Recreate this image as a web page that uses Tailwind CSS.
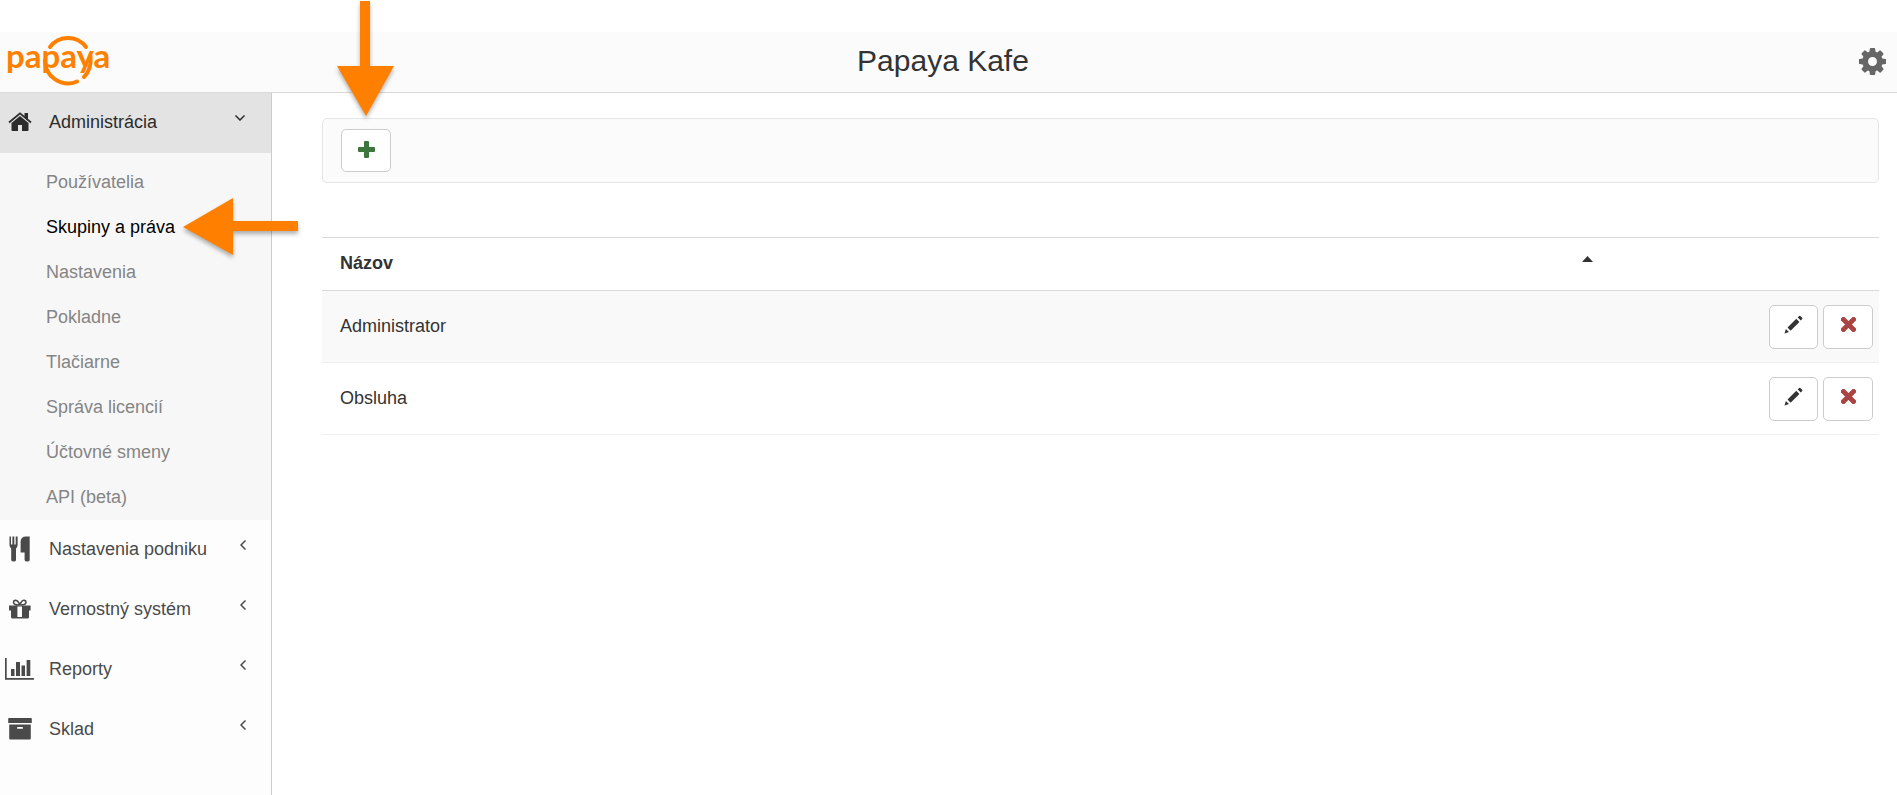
<!DOCTYPE html>
<html lang="sk">
  <head>
    <meta charset="UTF-8" />
    <meta name="viewport" content="width=device-width, initial-scale=1.0" />
    <title>Papaya Kafe</title>
    <script src="https://cdn.jsdelivr.net/npm/@tailwindcss/browser@4"></script>
  </head>
  <body class="relative min-h-screen flex flex-col bg-white pt-8 font-['Liberation_Sans',Arial,sans-serif] text-[18px] leading-6 text-[#333]">
    <!-- Header -->
    <header class="grid grid-cols-3 items-center h-[61px] pr-[11px] pb-[2px] bg-[#fbfbfb] border-b border-[#d9d9d9]">
      <a href="#" aria-label="papaya">
        <svg class="block" width="120" height="54" viewBox="-8 0 120 54" fill="none" stroke="#ff8000" stroke-width="4" stroke-linecap="round">
          <path d="M42 13A22.500 22.500 0 0 1 78 13" />
          <path d="M37 26A23 23 0 0 0 69 47.500" />
          <path d="M82.500 22C83.500 31 81 38 76 43" />
          <text x="-2" y="34" font-family="Lato, sans-serif" font-size="33" font-weight="700" fill="#ff8000" stroke="none">papaya</text>
        </svg>
      </a>
      <h1 class="text-center text-[30px] leading-9">Papaya Kafe</h1>
      <button type="button" class="justify-self-end text-[#666]" aria-label="Nastavenia">
        <svg class="block" width="27" height="27" viewBox="0 0 1536 1536" fill="currentColor">
          <path d="M1024 768q0-106-75-181t-181-75-181 75-75 181 75 181 181 75 181-75 75-181zm512-109v222q0 12-8 23t-20 13l-185 28q-19 54-39 91 35 50 107 138 10 12 10 25t-9 23q-27 37-99 108t-94 71q-12 0-26-9l-138-108q-44 23-91 38-16 136-29 186-7 28-36 28H657q-14 0-24.500-8.500T621 1506l-28-184q-49-16-90-37l-141 107q-10 9-25 9-14 0-25-11-126-114-165-168-7-10-7-23 0-12 8-23 15-21 51-66.500t54-70.500q-27-50-41-99L29 913q-13-2-21-12.500T0 877V655q0-12 8-23t19-13l186-28q14-46 39-92-40-57-107-138-10-12-10-24 0-10 9-23 26-36 98.500-107.500T337 135q13 0 26 10l138 107q44-23 91-38 16-136 29-186 7-28 36-28h222q14 0 24.500 8.500T915 30l28 184q49 16 90 37l142-107q9-9 24-9 13 0 25 10 129 119 165 170 7 8 7 22 0 12-8 23-15 21-51 66.500t-54 70.500q26 50 41 98l183 28q13 2 21 12.500t8 23.500z" />
        </svg>
      </button>
    </header>

    <div class="flex flex-1">
      <!-- Sidebar -->
      <nav class="w-[272px] shrink-0 bg-[#fdfdfd] border-r border-[#ccc] text-[#4a4a4a]">
        <a href="#" class="flex items-center h-15 pr-[26px] pb-[2px] bg-[#e3e3e3] text-[#2b2b2b]">
          <span class="w-[49px] pl-2">
            <svg width="24" height="20" viewBox="0 0 24 20" fill="currentColor">
              <path d="M3.500 11L12 4l8.500 7v7q0 1-1 1H14v-6h-4v6H4.500q-1 0-1-1z" />
              <path d="M1 10.500L12 1.400l11 9.100" fill="none" stroke="currentColor" stroke-width="1.800" />
              <path d="M16.500 1H20v7l-3.500-3z" />
            </svg>
          </span>
          <span class="flex-1">Administrácia</span>
          <svg class="mb-2" width="10" height="6" viewBox="0 0 10 6" fill="none" stroke="currentColor" stroke-width="1.500"><path d="M.5.5L5 5 9.500.5" /></svg>
        </a>
        <ul class="pt-[7px] bg-[#f7f7f7] text-[#858585]">
          <li><a href="#" class="flex items-center h-[45px] pl-[46px] pb-[2px]">Používatelia</a></li>
          <li><a href="#" class="flex items-center h-[45px] pl-[46px] pb-[2px] text-black">Skupiny a práva</a></li>
          <li><a href="#" class="flex items-center h-[45px] pl-[46px] pb-[2px]">Nastavenia</a></li>
          <li><a href="#" class="flex items-center h-[45px] pl-[46px] pb-[2px]">Pokladne</a></li>
          <li><a href="#" class="flex items-center h-[45px] pl-[46px] pb-[2px]">Tlačiarne</a></li>
          <li><a href="#" class="flex items-center h-[45px] pl-[46px] pb-[2px]">Správa licencií</a></li>
          <li><a href="#" class="flex items-center h-[45px] pl-[46px] pb-[2px]">Účtovné smeny</a></li>
          <li><a href="#" class="flex items-center h-[45px] pl-[46px] pb-[2px]">API (beta)</a></li>
        </ul>
        <a href="#" class="flex items-center h-15 pr-[25px] pb-[2px]">
          <span class="w-[49px] pl-[9px]">
            <svg width="22" height="26" viewBox="0 0 22 26" fill="currentColor">
              <path d="M.5.5h1.500v8h1.400v-8h1.900v8h1.400v-8H8.600v8.500q0 2-1.600 3.500V24q0 1.500-2.300 1.500T2.200 24V12.500Q.5 11 .5 9z" />
              <path d="M20.700.5V24q0 1.500-2.500 1.500T15.600 24v-7.500h-4V6q0-5.500 5.500-5.500z" />
            </svg>
          </span>
          <span class="flex-1">Nastavenia podniku</span>
          <svg class="mb-2" width="6" height="10" viewBox="0 0 6 10" fill="none" stroke="currentColor" stroke-width="1.500"><path d="M5.500.5L1 5l4.500 4.500" /></svg>
        </a>
        <a href="#" class="flex items-center h-15 pr-[25px] pb-[2px]">
          <span class="w-[49px] pl-[9px]">
            <svg width="22" height="20" viewBox="0 0 22 20" fill="currentColor">
              <path d="M10 6C7 6 4.500 5.500 4.500 3.300S7.500.6 9 2.600L10.800 5.500 12.600 2.600C14 .6 17 1 17 3.300S15 6 11.500 6" fill="none" stroke="currentColor" stroke-width="1.600" />
              <path d="M0 6.500h21.600v5h-1.600V18q0 1.500-1.500 1.500h-15Q2 19.500 2 18v-6.500H0z" />
              <path d="M8.400 7.500h4.600v10.500H8.400z" fill="#fdfdfd" />
            </svg>
          </span>
          <span class="flex-1">Vernostný systém</span>
          <svg class="mb-2" width="6" height="10" viewBox="0 0 6 10" fill="none" stroke="currentColor" stroke-width="1.500"><path d="M5.500.5L1 5l4.500 4.500" /></svg>
        </a>
        <a href="#" class="flex items-center h-15 pr-[25px] pb-[2px]">
          <span class="w-[49px] pl-[5px]">
            <svg width="29" height="22" viewBox="0 0 29 22" fill="currentColor">
              <path d="M0 0h1.700v20H29v1.800H0zM6 11h3.500v7H6zM11 4h4v14h-4zM16.500 7.500H20V18h-3.500zM21.600 2h3.700v16h-3.700z" />
            </svg>
          </span>
          <span class="flex-1">Reporty</span>
          <svg class="mb-2" width="6" height="10" viewBox="0 0 6 10" fill="none" stroke="currentColor" stroke-width="1.500"><path d="M5.500.5L1 5l4.500 4.500" /></svg>
        </a>
        <a href="#" class="flex items-center h-15 pr-[25px] pb-[2px]">
          <span class="w-[49px] pl-2">
            <svg width="24" height="22" viewBox="0 0 24 22" fill="currentColor">
              <path d="M1 0h22q.8 0 .8.800V5H.2V.8Q.2 0 1 0z" />
              <path fill-rule="evenodd" d="M1.200 6.400h21.600v14.200q0 1-1 1H2.200q-1 0-1-1zM9.800 9q-.8 0-.8.900t.8.900h4.400q.8 0 .8-.9t-.8-.9z" />
            </svg>
          </span>
          <span class="flex-1">Sklad</span>
          <svg class="mb-2" width="6" height="10" viewBox="0 0 6 10" fill="none" stroke="currentColor" stroke-width="1.500"><path d="M5.500.5L1 5l4.500 4.500" /></svg>
        </a>
      </nav>

      <!-- Content -->
      <main class="flex-1 pt-[25px] pl-[50px] pr-[18px]">
        <div class="px-[18px] py-[10px] bg-[#fbfbfb] border border-[#e5e5e5] rounded-[5px]">
          <button type="button" class="flex justify-center items-center w-[50px] h-[43px] pb-[2px] bg-white border border-[#ccc] rounded-[5px] text-[#3c763d]" aria-label="Pridať">
            <svg width="17" height="17" viewBox="0 0 17 17" fill="currentColor"><path d="M7 0h3q1 0 1 1v5h5q1 0 1 1v3q0 1-1 1h-5v5q0 1-1 1H7q-1 0-1-1v-5H1q-1 0-1-1V7q0-1 1-1h5V1q0-1 1-1z" /></svg>
          </button>
        </div>

        <table class="w-full mt-[54px] border-collapse">
          <thead>
            <tr class="h-[53px] border-y border-[#d9d9d9]">
              <th class="w-[82%] pl-[18px] pr-[6px] pb-[2px] text-left font-bold">
                <div class="flex items-center justify-between">
                  Názov
                  <svg class="mb-2" width="11" height="6" viewBox="0 0 11 6" fill="currentColor"><path d="M0 6L5.500 0 11 6z" /></svg>
                </div>
              </th>
              <th></th>
            </tr>
          </thead>
          <tbody>
            <tr class="h-[72px] bg-[#f9f9f9] border-b border-[#eee]">
              <td class="pl-[18px] pb-[2px]">Administrator</td>
              <td class="pr-[6px]">
                <div class="flex justify-end gap-[5px]">
                  <button type="button" class="flex justify-center items-center w-[49px] h-11 pb-1 bg-white border border-[#ccc] rounded-[5px]" aria-label="Upraviť">
                    <svg width="19" height="19" viewBox="0 0 19 19" fill="currentColor"><path d="M.5 18.500l1.400-4.500 3.100 3.100zM3.500 12.500l8.800-8.700 3.100 3.100-8.800 8.800zM13.700 2.400L15.100 1q.7-.6 1.300 0l1.800 1.800q.6.600 0 1.300l-1.400 1.400z" /></svg>
                  </button>
                  <button type="button" class="flex justify-center items-center w-[50px] h-11 pb-1 bg-white border border-[#ccc] rounded-[5px] text-[#a94442]" aria-label="Odstrániť">
                    <svg width="15" height="15" viewBox="0 0 15 15"><path d="M2.500 2.500l10 10M12.500 2.500l-10 10" fill="none" stroke="currentColor" stroke-width="4.800" stroke-linecap="square" stroke-linejoin="round" /></svg>
                  </button>
                </div>
              </td>
            </tr>
            <tr class="h-[72px] border-b border-[#eee]">
              <td class="pl-[18px] pb-[2px]">Obsluha</td>
              <td class="pr-[6px]">
                <div class="flex justify-end gap-[5px]">
                  <button type="button" class="flex justify-center items-center w-[49px] h-11 pb-1 bg-white border border-[#ccc] rounded-[5px]" aria-label="Upraviť">
                    <svg width="19" height="19" viewBox="0 0 19 19" fill="currentColor"><path d="M.5 18.500l1.400-4.500 3.100 3.100zM3.500 12.500l8.800-8.700 3.100 3.100-8.800 8.800zM13.700 2.400L15.100 1q.7-.6 1.300 0l1.800 1.800q.6.600 0 1.300l-1.400 1.400z" /></svg>
                  </button>
                  <button type="button" class="flex justify-center items-center w-[50px] h-11 pb-1 bg-white border border-[#ccc] rounded-[5px] text-[#a94442]" aria-label="Odstrániť">
                    <svg width="15" height="15" viewBox="0 0 15 15"><path d="M2.500 2.500l10 10M12.500 2.500l-10 10" fill="none" stroke="currentColor" stroke-width="4.800" stroke-linecap="square" stroke-linejoin="round" /></svg>
                  </button>
                </div>
              </td>
            </tr>
          </tbody>
        </table>
      </main>
    </div>

    <!-- Pointer arrows over the page -->
    <svg class="absolute top-0 left-[337px] drop-shadow-[0_3px_2px_rgba(0,0,0,0.3)]" width="58" height="117" viewBox="0 0 58 117" fill="#ff8000"><path d="M23 1h10v65h24L29 116 0 66h23z" /></svg>
    <svg class="absolute top-[198px] left-[183px] drop-shadow-[0_3px_2px_rgba(0,0,0,0.3)]" width="115" height="58" viewBox="0 0 115 58" fill="#ff8000"><path d="M0 29L50 0v23h65v10H50v24z" /></svg>
  </body>
</html>
